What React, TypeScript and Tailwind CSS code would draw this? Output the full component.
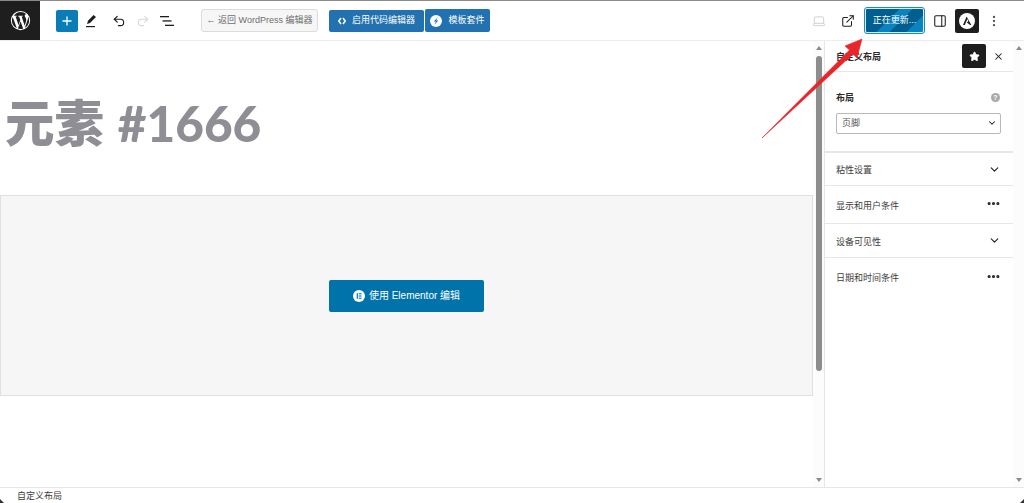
import { ChevronDown, Ellipsis, ExternalLink, Laptop, PanelRight, Plus, Redo2, Star, Undo2, X, EllipsisVertical } from "lucide-react";

const font = "font-['Liberation_Sans','Noto_Sans_CJK_SC',sans-serif]";

const WpLogo = () => (
  <svg width="21" height="21" viewBox="0 0 24 24" fill="#fff">
    <path d="M12 1a11 11 0 1 0 0 22 11 11 0 0 0 0-22Zm0 1.2c2.6 0 4.9 1 6.6 2.6h-.2c-1 0-1.6.8-1.6 1.7 0 .8.5 1.5 1 2.3.4.6.8 1.5.8 2.7 0 .8-.3 1.8-.8 3.1l-1 3.3-3.500-10.500c.6 0 1.100-.1 1.100-.1.5-.1.500-.8 0-.8 0 0-1.500.1-2.500.1-.9 0-2.400-.1-2.400-.1-.5 0-.6.800-.1.800 0 0 .5.100 1 .1l1.400 3.900-2 6-3.400-9.900c.6 0 1.100-.1 1.100-.1.500-.1.500-.8 0-.8 0 0-1.500.1-2.500.1h-.6A9.800 9.800 0 0 1 12 2.200ZM2.200 12c0-1.400.3-2.800.9-4l4.700 12.800A9.800 9.800 0 0 1 2.200 12Zm9.900 1 2.900 8a9.800 9.800 0 0 1-6 .2l3.100-8.200Zm8.500-5.600a9.800 9.800 0 0 1-3.700 13.200l3-8.600c.6-1.400.7-2.500.7-3.500 0-.4 0-.7 0-1.100Z" />
  </svg>
);

const ListIcon = () => (
  <svg width="14" height="12" viewBox="0 0 14 12" fill="#1e1e1e">
    <rect x="0" y="1" width="9" height="1.300" />
    <rect x="2.500" y="5.300" width="9" height="1.300" />
    <rect x="5" y="9.700" width="9" height="1.300" />
  </svg>
);

const PenIcon = () => (
  <svg width="12" height="14" viewBox="0 0 12 14" fill="#1e1e1e">
    <path d="M8.500 1 11 3 5 9 2 10l1-3.200L8.500 1Z" />
    <rect x="1" y="12" width="9" height="1.200" />
  </svg>
);

const CodeIcon = () => (
  <svg width="8" height="8" viewBox="0 0 8 8" fill="none" stroke="#fff" strokeWidth="1.500">
    <path d="M3 1 .8 4 3 7" />
    <path d="M5 1l2.200 3L5 7" />
  </svg>
);

const ElementorIcon = () => (
  <svg width="12" height="12" viewBox="0 0 13 13">
    <circle cx="6.500" cy="6.500" r="6.500" fill="#fff" />
    <rect x="4" y="3.500" width="1.300" height="6" fill="#0073aa" />
    <rect x="6.200" y="3.500" width="3" height="1.200" fill="#0073aa" />
    <rect x="6.200" y="5.900" width="3" height="1.200" fill="#0073aa" />
    <rect x="6.200" y="8.300" width="3" height="1.200" fill="#0073aa" />
  </svg>
);

const SIcon = () => (
  <svg width="12" height="12" viewBox="0 0 12 12">
    <circle cx="6" cy="6" r="6" fill="#fff" />
    <path d="M7.800 2.300 3.800 6.400h2.100L4.300 9.700l4-4.200H6.200l1.600-3.200Z" fill="#2271b1" />
  </svg>
);

const AstraIcon = () => (
  <svg width="16" height="16" viewBox="0 0 16 16">
    <circle cx="8" cy="8" r="8" fill="#fff" />
    <path d="M7.600 3.500 4 12h1.800l2.600-6 .9 2.200-1.500 1.200 3.300 2.600h1.200L7.600 3.500Z" fill="#1e1e1e" />
  </svg>
);

const ScrollArrows = () => (
  <div className="flex h-full w-[11px] flex-col items-center justify-between bg-[#fcfcfc] py-[5px]">
    <div className="h-0 w-0 border-x-[3px] border-b-[4px] border-x-transparent border-b-[#8a8a8a]" />
    <div className="h-0 w-0 border-x-[3px] border-t-[4px] border-x-transparent border-t-[#8a8a8a]" />
  </div>
);

const PanelRow = ({ label, dots, h }: { label: string; dots?: boolean; h: string }) => (
  <div className={`flex items-center justify-between border-b border-[#e6e6e6] pl-[11px] pr-3 ${h}`}>
    <span className="translate-y-[2px] text-[9px] text-[#3c3c3c]">{label}</span>
    {dots ? (
      <Ellipsis size={15} strokeWidth={3} className="mb-[2px] text-[#1e1e1e]" />
    ) : (
      <ChevronDown size={13} strokeWidth={2} className="text-[#1e1e1e]" />
    )}
  </div>
);

const App = () => {
  return (
    <div className={`${font} relative flex h-[503px] w-[1024px] flex-col overflow-hidden bg-white`}>
      <header className="flex h-[41px] shrink-0 items-center border-t border-b border-t-[#8a8a8a] border-b-[#ededed] bg-white pr-[23px]">
        <div className="flex h-full w-10 shrink-0 items-center justify-center bg-[#1e1e1e]">
          <WpLogo />
        </div>
        <button className="ml-4 flex h-[22px] w-[22px] items-center justify-center rounded-[2px] bg-[#0a7cb8] text-white">
          <Plus size={14} strokeWidth={2.200} />
        </button>
        <div className="ml-[7px]">
          <PenIcon />
        </div>
        <div className="ml-[15px] flex items-center gap-[10px]">
          <Undo2 size={14} strokeWidth={2} className="text-[#1e1e1e]" />
          <Redo2 size={14} strokeWidth={2} className="text-[#d8d8d8]" />
          <ListIcon />
        </div>
        <button className="ml-[27px] flex h-[23px] w-[117px] items-center justify-center rounded-[3px] border border-[#dcdcdc] bg-[#f6f6f6] text-[9px] text-[#6e6e6e]">
          ← 返回 WordPress 编辑器
        </button>
        <button className="ml-[11px] flex h-[22px] w-[95px] items-center justify-center gap-[6px] rounded-[2px] bg-[#2271b1] text-[9px] text-white">
          <CodeIcon />
          启用代码编辑器
        </button>
        <button className="ml-px flex h-[23px] w-[65px] items-center justify-center gap-[6px] rounded-[2px] bg-[#2271b1] text-[9px] text-white">
          <SIcon />
          模板套件
        </button>
        <div className="ml-auto flex items-center">
          <Laptop size={14} strokeWidth={1.300} className="text-[#c4c4c4]" />
          <ExternalLink size={14} strokeWidth={1.800} className="ml-[15px] text-[#1e1e1e]" />
          <button className="ml-[10px] h-[25px] w-[59px] rounded-[2px] border border-[#d8eef8] bg-[linear-gradient(135deg,#005f8f_0_42%,#0a84c0_42%_58%,#005f8f_58%_80%,#0a84c0_80%)] text-[9px] text-white outline-1 outline-[#1a8cc4]">
            正在更新...
          </button>
          <PanelRight size={14} strokeWidth={1.800} className="ml-[9px] text-[#1e1e1e]" />
          <div className="ml-2 flex h-6 w-6 items-center justify-center rounded-[2px] bg-[#1e1e1e]">
            <AstraIcon />
          </div>
          <EllipsisVertical size={14} strokeWidth={2} className="ml-2 text-[#555]" />
        </div>
      </header>

      <div className="flex min-h-0 flex-1">
        <main className="flex w-[813px] shrink-0 flex-col">
          <div className="flex h-[154px] shrink-0 items-center pl-[5px] pt-[10px]">
            <h1 className="font-['Lato','Noto_Sans_CJK_SC',sans-serif] text-[49.5px] font-black text-[#8f8e94] [word-spacing:2px]">元素 #1666</h1>
          </div>
          <div className="flex h-[201px] shrink-0 items-center justify-center border border-[#e0e0e0] bg-[#f6f6f6]">
            <button className="flex h-8 w-[155px] items-center justify-center gap-[4px] rounded-[2px] bg-[#0073aa] text-[10px] text-white">
              <ElementorIcon />
              使用 Elementor 编辑
            </button>
          </div>
        </main>
        <div className="relative w-[11px] shrink-0">
          <ScrollArrows />
          <div className="absolute left-[3px] top-[15px] h-[315px] w-[6px] rounded-full bg-[#8d8d8d]" />
        </div>
        <aside className="flex flex-1 border-l border-[#e6e6e6]">
          <div className="flex min-w-0 flex-1 flex-col">
            <div className="flex h-[31px] shrink-0 items-center justify-between border-b border-[#e6e6e6] pl-[11px] pr-[9px]">
              <span className="translate-y-[2px] text-[9px] font-bold text-[#2a2a2a]">自定义布局</span>
              <div className="flex items-center gap-[7px]">
                <div className="flex h-6 w-6 items-center justify-center rounded-[2px] bg-[#1e1e1e]">
                  <Star size={11} fill="#fff" className="text-white" />
                </div>
                <X size={11} strokeWidth={2.200} className="text-[#1e1e1e]" />
              </div>
            </div>
            <section className="h-[81px] shrink-0 border-b-2 border-[#e6e6e6] pl-[11px] pr-3 pt-[19px]">
              <div className="flex items-center justify-between pr-px">
                <span className="translate-y-px text-[9px] font-bold text-[#2a2a2a]">布局</span>
                <span className="flex h-[9px] w-[9px] items-center justify-center rounded-full bg-[#a8a8a8] text-[7px] font-bold text-white">?</span>
              </div>
              <div className="mt-2 flex h-[21px] items-center justify-between rounded-[2px] border border-[#b8b8b8] pl-[5px] pr-[3px] text-[9px] text-[#555]">
                <span className="translate-y-px">页脚</span>
                <ChevronDown size={10} strokeWidth={2.500} className="text-[#1e1e1e]" />
              </div>
            </section>
            <PanelRow label="粘性设置" h="h-[33px]" />
            <PanelRow label="显示和用户条件" dots h="h-[38px]" />
            <PanelRow label="设备可见性" h="h-[34px]" />
            <div className="flex h-[38px] items-center justify-between pl-[11px] pr-3">
              <span className="translate-y-[2px] text-[9px] text-[#3c3c3c]">日期和时间条件</span>
              <Ellipsis size={15} strokeWidth={3} className="mb-[2px] text-[#1e1e1e]" />
            </div>
          </div>
          <ScrollArrows />
        </aside>
      </div>

      <footer className="flex h-4 shrink-0 items-center border-t border-[#e6e6e6] pl-[17px] pt-[3px] text-[9px] text-[#3c3c3c]">
        自定义布局
      </footer>

      <svg className="absolute left-[755px] top-[35px]" width="115" height="110" viewBox="0 0 115 110">
        <path d="M107 4 90 11 94.500 15 7 103 98 19 102 23Z" fill="#e8262a" stroke="#e8262a" strokeWidth="0.600" />
      </svg>
      <div className="absolute bottom-0 left-0 h-0 w-0 border-t-[4px] border-l-[4px] border-t-transparent border-l-[#333]" />
      <div className="absolute bottom-0 right-0 h-0 w-0 border-b-[4px] border-l-[4px] border-b-[#333] border-l-transparent" />
    </div>
  );
};

export default App;
